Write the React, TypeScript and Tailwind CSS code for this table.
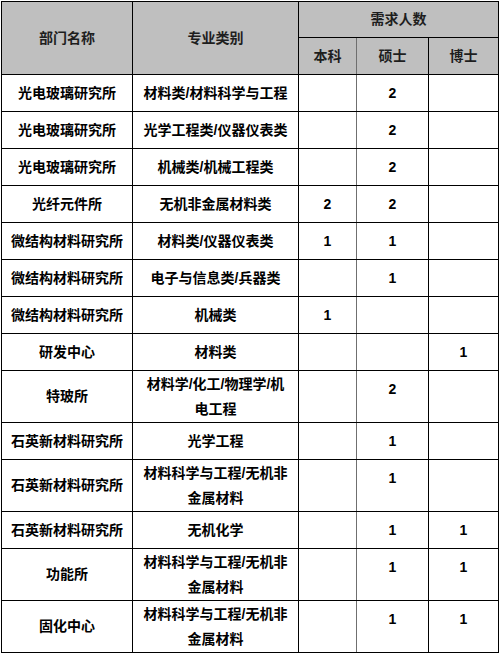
import React from "react";

type Row = {
  dept: string;
  major: string[];
  b: string;
  m: string;
  d: string;
};

const rows: Row[] = [
  { dept: "光电玻璃研究所", major: ["材料类/材料科学与工程"], b: "", m: "2", d: "" },
  { dept: "光电玻璃研究所", major: ["光学工程类/仪器仪表类"], b: "", m: "2", d: "" },
  { dept: "光电玻璃研究所", major: ["机械类/机械工程类"], b: "", m: "2", d: "" },
  { dept: "光纤元件所", major: ["无机非金属材料类"], b: "2", m: "2", d: "" },
  { dept: "微结构材料研究所", major: ["材料类/仪器仪表类"], b: "1", m: "1", d: "" },
  { dept: "微结构材料研究所", major: ["电子与信息类/兵器类"], b: "", m: "1", d: "" },
  { dept: "微结构材料研究所", major: ["机械类"], b: "1", m: "", d: "" },
  { dept: "研发中心", major: ["材料类"], b: "", m: "", d: "1" },
  { dept: "特玻所", major: ["材料学/化工/物理学/机", "电工程"], b: "", m: "2", d: "" },
  { dept: "石英新材料研究所", major: ["光学工程"], b: "", m: "1", d: "" },
  { dept: "石英新材料研究所", major: ["材料科学与工程/无机非", "金属材料"], b: "", m: "1", d: "" },
  { dept: "石英新材料研究所", major: ["无机化学"], b: "", m: "1", d: "1" },
  { dept: "功能所", major: ["材料科学与工程/无机非", "金属材料"], b: "", m: "1", d: "1" },
  { dept: "固化中心", major: ["材料科学与工程/无机非", "金属材料"], b: "", m: "1", d: "1" },
];

function Num({ v }: { v: string }) {
  return (
    <div className="h-[36px] flex items-center justify-center">{v}</div>
  );
}

export default function App() {
  return (
    <div
      className="w-[500px] h-[654px] bg-white pt-px pl-px text-[14px] font-bold text-black overflow-hidden"
      style={{ fontFamily: '"Liberation Sans", "Noto Sans CJK SC", sans-serif' }}
    >
      <table className="border-collapse table-fixed w-[498px]">
        <colgroup>
          <col className="w-[131px]" />
          <col className="w-[166px]" />
          <col className="w-[58px]" />
          <col className="w-[72px]" />
          <col className="w-[70px]" />
        </colgroup>
        <thead>
          <tr className="h-[36px]">
            <th rowSpan={2} className="border border-black bg-[#bfbfbf] text-[#1e1e1e] font-bold text-center align-middle p-0">
              部门名称
            </th>
            <th rowSpan={2} className="border border-black bg-[#bfbfbf] text-[#1e1e1e] font-bold text-center align-middle p-0">
              专业类别
            </th>
            <th colSpan={3} className="border border-black bg-[#bfbfbf] text-[#1e1e1e] font-bold text-center align-middle p-0">
              需求人数
            </th>
          </tr>
          <tr className="h-[37px]">
            <th className="border border-black border-r-[#6f6f6f] bg-[#bfbfbf] text-[#1e1e1e] font-bold text-center align-middle p-0">
              本科
            </th>
            <th className="border border-black border-l-[#6f6f6f] bg-[#bfbfbf] text-[#1e1e1e] font-bold text-center align-middle p-0">
              硕士
            </th>
            <th className="border border-black bg-[#bfbfbf] text-[#1e1e1e] font-bold text-center align-middle p-0">
              博士
            </th>
          </tr>
        </thead>
        <tbody>
          {rows.map((r, i) => {
            const dbl = r.major.length > 1;
            return (
              <tr key={i} className={dbl ? "h-[52px]" : "h-[37px]"}>
                <td className="border border-black text-center align-middle p-0">{r.dept}</td>
                <td className="border border-black text-center align-middle p-0 leading-[25px]">
                  {r.major.map((l, j) => (
                    <div key={j}>{l}</div>
                  ))}
                </td>
                <td className="border border-black border-r-[#6f6f6f] text-center align-top p-0">
                  <Num v={r.b} />
                </td>
                <td className="border border-black border-l-[#6f6f6f] text-center align-top p-0">
                  <Num v={r.m} />
                </td>
                <td className="border border-black text-center align-top p-0">
                  <Num v={r.d} />
                </td>
              </tr>
            );
          })}
        </tbody>
      </table>
    </div>
  );
}
